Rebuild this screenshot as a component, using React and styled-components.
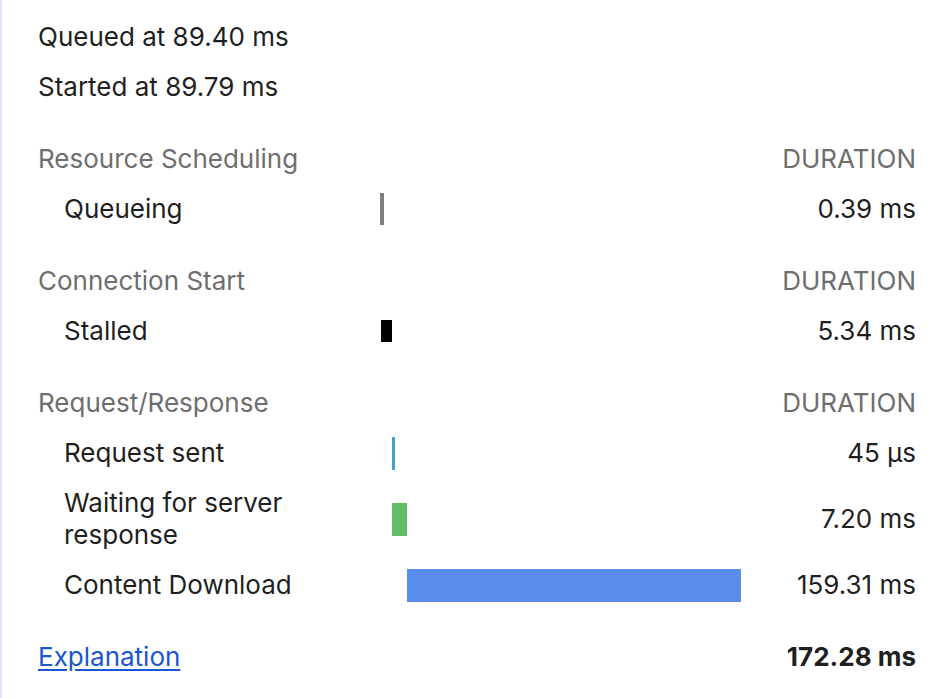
import React from 'react';
import styled, { createGlobalStyle } from 'styled-components';

const GlobalStyle = createGlobalStyle`
  html, body {
    margin: 0;
    padding: 0;
    background: #ffffff;
  }
  body {
    font-family: Inter, "Noto Sans", "Liberation Sans", sans-serif;
    color: #1f1f1f;
  }
`;

const TOTAL = 172.28;
const TRACK = 361;

const sections = [
  {
    title: 'Resource Scheduling',
    rows: [{ label: 'Queueing', start: 0, dur: 0.39, value: '0.39 ms', kind: 'queueing' }],
  },
  {
    title: 'Connection Start',
    rows: [{ label: 'Stalled', start: 0.39, dur: 5.34, value: '5.34 ms', kind: 'stalled' }],
  },
  {
    title: 'Request/Response',
    rows: [
      { label: 'Request sent', start: 5.73, dur: 0.045, value: '45 µs', kind: 'sent' },
      { label: 'Waiting for server response', start: 5.775, dur: 7.2, value: '7.20 ms', kind: 'waiting' },
      { label: 'Content Download', start: 12.975, dur: 159.31, value: '159.31 ms', kind: 'download' },
    ],
  },
];

const barStyles = {
  queueing: { color: '#7d7d7d', height: 32, min: 4 },
  stalled: { color: '#000000', height: 22, min: 4 },
  sent: { color: '#44a2c9', height: 33, min: 3 },
  waiting: { color: '#63bc69', height: 33, min: 3 },
  download: { color: '#5b8cec', height: 33, min: 3 },
};

const Panel = styled.div`
  border-left: 2px solid #dbe5fc;
  min-height: 698px;
  box-sizing: border-box;
  padding: 12px 36px 0 36px;
  font-size: 26px;
  line-height: 32px;
`;

const Row = styled.div`
  display: grid;
  grid-template-columns: 342px ${TRACK}px 1fr;
  align-items: center;
  padding: 9px 0;
  margin-top: ${(p) => (p.$gap ? '22px' : '0')};
`;

const Label = styled.div`
  padding-left: ${(p) => (p.$indent ? '26px' : '0')};
  padding-right: 40px;
  color: ${(p) => (p.$muted ? '#6e6e6e' : '#1f1f1f')};
`;

const Track = styled.div`
  display: flex;
  align-items: center;
  height: 32px;
`;

const Bar = styled.div`
  flex: none;
  background: ${(p) => p.$color};
  height: ${(p) => p.$h}px;
`;

const Value = styled.div`
  text-align: right;
  color: ${(p) => (p.$muted ? '#6e6e6e' : '#1f1f1f')};
  font-weight: ${(p) => (p.$bold ? 700 : 400)};
  text-transform: ${(p) => (p.$caps ? 'uppercase' : 'none')};
`;

const Info = styled.div`
  padding: 9px 0;
`;

const Link = styled.a`
  color: #1a55d4;
  text-decoration: underline;
  text-underline-offset: 3px;
  cursor: pointer;
`;

function TimingBar({ start, dur, kind }) {
  const s = barStyles[kind];
  const left = (start / TOTAL) * TRACK;
  const width = Math.max(s.min, Math.round((dur / TOTAL) * TRACK));
  return (
    <Track>
      <Bar $color={s.color} $h={s.height} style={{ marginLeft: Math.round(left), width }} />
    </Track>
  );
}

export default function App() {
  return (
    <>
      <GlobalStyle />
      <Panel>
        <Info>Queued at 89.40 ms</Info>
        <Info>Started at 89.79 ms</Info>
        {sections.map((sec) => (
          <React.Fragment key={sec.title}>
            <Row $gap>
              <Label $muted>{sec.title}</Label>
              <div />
              <Value $muted $caps>Duration</Value>
            </Row>
            {sec.rows.map((r) => (
              <Row key={r.label}>
                <Label $indent>{r.label}</Label>
                <TimingBar start={r.start} dur={r.dur} kind={r.kind} />
                <Value>{r.value}</Value>
              </Row>
            ))}
          </React.Fragment>
        ))}
        <Row $gap>
          <Label>
            <Link>Explanation</Link>
          </Label>
          <div />
          <Value $bold>172.28 ms</Value>
        </Row>
      </Panel>
    </>
  );
}
